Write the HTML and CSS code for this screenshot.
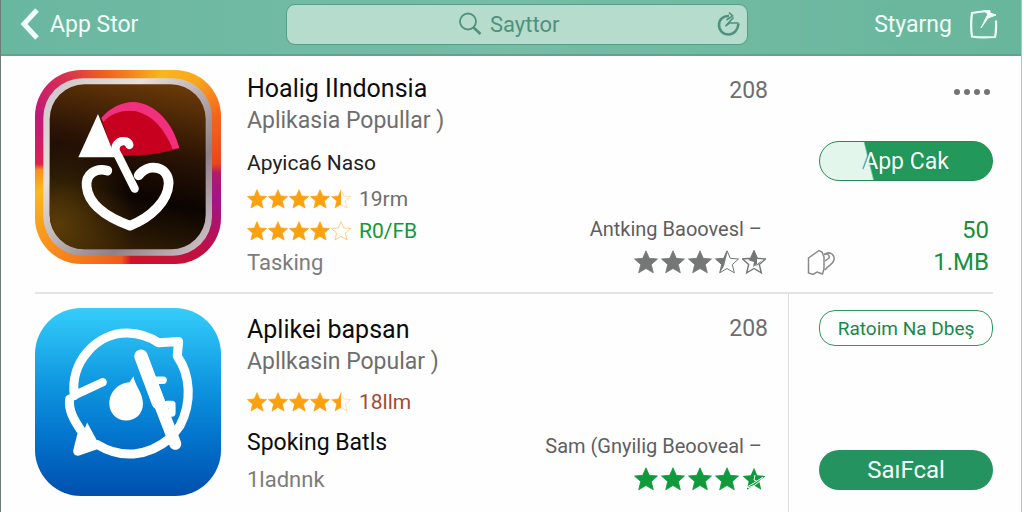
FILE: index.html
```html
<!DOCTYPE html>
<html lang="id">
<head>
    <meta charset="UTF-8">
    <meta name="viewport" content="width=device-width, initial-scale=1.0">
    <title>App Stor</title>
    <link rel="stylesheet" href="styles.css">
</head>
<body>
    <!-- Shared star shapes -->
    <svg class="defs" width="0" height="0" aria-hidden="true">
        <defs>
            <path id="star-path" d="M12 0.8 L15.3 8.3 L23.5 9 L17.3 14.500 L19.300 22.800 L12 18.500 L4.700 22.800 L6.700 14.500 L0.500 9 L8.700 8.300 Z"/>
            <clipPath id="half"><rect x="0" y="0" width="12" height="24"/></clipPath>
            <clipPath id="slant"><path d="M0 0 H13 L9 16 L4 24 H0 Z"/></clipPath>
            <symbol id="star" viewBox="0 0 24 24"><use href="#star-path" fill="currentColor" stroke="currentColor" stroke-width="0.8"/></symbol>
            <symbol id="star-half" viewBox="0 0 24 24">
                <use href="#star-path" fill="none" stroke="currentColor" stroke-width="1" stroke-opacity="0.4"/>
                <use href="#star-path" fill="currentColor" clip-path="url(#half)"/>
            </symbol>
            <symbol id="star-empty" viewBox="0 0 24 24">
                <use href="#star-path" fill="none" stroke="currentColor" stroke-width="1" stroke-opacity="0.6"/>
            </symbol>
            <symbol id="star-slant" viewBox="0 0 24 24">
                <use href="#star-path" fill="none" stroke="currentColor" stroke-width="1"/>
                <use href="#star-path" fill="currentColor" clip-path="url(#slant)"/>
            </symbol>
            <symbol id="star-broken" viewBox="0 0 24 24">
                <use href="#star-path" fill="none" stroke="currentColor" stroke-width="1.4"/>
                <path d="M12 1 L15 8 V14 L11 17 L12 12 L6 10 L9 8 Z M13 16 L20 10 L16 15 Z" fill="currentColor"/>
            </symbol>
            <symbol id="star-cut" viewBox="0 0 24 24">
                <use href="#star-path" fill="currentColor"/>
                <path d="M5 20 L12 16 L21 10 L18 14 L13 18 L7 20.5 Z M13 8 L12 13 L15 14.5" fill="none" stroke="#fff" stroke-width="1"/>
            </symbol>
        </defs>
    </svg>

    <div class="page">
        <header class="topbar">
            <a class="back" href="#">
                <svg width="20" height="34" viewBox="0 0 20 34" aria-hidden="true"><path d="M17 3 L4 17 L17 31" fill="none" stroke="currentColor" stroke-width="5"/></svg>
                App Stor
            </a>
            <label class="search">
                <svg width="24" height="24" viewBox="0 0 24 24" fill="none" stroke="currentColor" aria-hidden="true"><circle cx="10" cy="9.500" r="8" stroke-width="1.800"/><path d="M15.500 15.500 L22.500 22" stroke-width="2.600"/></svg>
                <input type="text" value="Sayttor" aria-label="Sayttor">
                <button class="reload" type="button" aria-label="Reload">
                    <svg width="24" height="26" viewBox="0 0 24 26" fill="none" stroke="currentColor" aria-hidden="true"><path d="M12 5 C6 4.500 2 9 2 14 C2 19.500 6 23.500 11.500 23.500 C17 23.500 21 19 21.500 12.500" stroke-width="2.600"/><path d="M12 1.500 L15.500 5 L9.500 9 M21.500 12 H12.500 L8.500 15 L16.500 6.500" stroke-width="1.600"/></svg>
                </button>
            </label>
            <a class="share" href="#">
                Styarng
                <svg width="30" height="32" viewBox="0 0 30 32" fill="none" stroke="currentColor" aria-hidden="true"><path d="M18 3 L4 5 C3 12 3 22 4 28.500 C11 30 20 29.500 27 29 C28.500 23 28 19 28 12.500" stroke-width="2.200"/><path d="M16 3 L22 2.500 L22 5 L28 7 L20 10 L13 20 L20 6 Z" fill="currentColor" stroke-width="1"/></svg>
            </a>
        </header>

        <main class="apps">
            <article class="app">
                <div class="tile tile-heart">
                    <svg viewBox="27 28 558 582" preserveAspectRatio="none" aria-hidden="true">
                        <defs>
                            <linearGradient id="brown" x1="0.8" y1="0" x2="0.6" y2="1">
                                <stop offset="0" stop-color="#6b3a08"/>
                                <stop offset="0.4" stop-color="#2c1405"/>
                                <stop offset="0.7" stop-color="#0b0402"/>
                                <stop offset="1" stop-color="#2e1c04"/>
                            </linearGradient>
                            <radialGradient id="glow" cx="0.05" cy="0.85" r="0.5">
                                <stop offset="0" stop-color="#5a3c08"/>
                                <stop offset="1" stop-color="#5a3c08" stop-opacity="0"/>
                            </radialGradient>
                            <linearGradient id="silver" x1="0" y1="0" x2="1" y2="1">
                                <stop offset="0" stop-color="#c9c2c8"/>
                                <stop offset="0.3" stop-color="#e8e0dc"/>
                                <stop offset="0.7" stop-color="#8d8088"/>
                                <stop offset="1" stop-color="#d8ccd0"/>
                            </linearGradient>
                        </defs>
                        <rect x="52" y="53" width="506" height="532" rx="118" fill="url(#silver)"/>
                        <rect x="71" y="71" width="468" height="495" rx="104" fill="url(#brown)"/>
                        <rect x="71" y="71" width="468" height="495" rx="104" fill="url(#glow)"/>
                        <path d="M226 172 C255 138 300 118 340 126 C400 140 442 194 460 262 C400 282 330 288 262 284 Z" fill="#c8001f"/>
                        <path d="M226 172 C255 138 300 118 340 126 C400 140 442 194 460 262 L440 266 C416 204 380 164 330 152 C290 146 255 158 232 184 Z" fill="#f0307c"/>
                        <path d="M216 160 L268 290 H157 Z" fill="#fff"/>
                        <g fill="none" stroke="#fff" stroke-linecap="round" stroke-linejoin="round">
                            <path d="M310 253 C306 238 282 238 272 252 C264 266 270 276 278 288 L326 384" stroke-width="25"/>
                            <path d="M244 330 C210 320 178 340 182 378 C188 436 250 472 312 495 C376 470 426 420 428 368 C428 316 366 306 338 344" stroke-width="29"/>
                        </g>
                    </svg>
                </div>
                <div class="info">
                    <h2 class="name">Hoalig IIndonsia</h2>
                    <p class="kind">Aplikasia Popullar )</p>
                    <p class="maker">Apyica6 Naso</p>
                    <div class="rating">
                        <span class="stars">
                            <svg><use href="#star"/></svg><svg><use href="#star"/></svg><svg><use href="#star"/></svg><svg><use href="#star"/></svg><svg><use href="#star-half"/></svg>
                        </span>
                        <span class="muted">19rm</span>
                    </div>
                    <div class="rating">
                        <span class="stars">
                            <svg><use href="#star"/></svg><svg><use href="#star"/></svg><svg><use href="#star"/></svg><svg><use href="#star"/></svg><svg><use href="#star-empty"/></svg>
                        </span>
                        <span class="green">R0/FB</span>
                    </div>
                    <p class="note">Tasking</p>
                </div>
                <div class="review">
                    <span class="count">208</span>
                    <p class="reviewer">Antking Baoovesl –</p>
                    <span class="stars stars-large grey">
                        <svg><use href="#star"/></svg><svg><use href="#star"/></svg><svg><use href="#star"/></svg><svg><use href="#star-slant"/></svg><svg><use href="#star-broken"/></svg>
                    </span>
                </div>
                <div class="side">
                    <button class="more" type="button" aria-label="More"><i></i><i></i><i></i><i></i></button>
                    <button class="pill pill-progress" type="button">App Cak</button>
                    <p class="size">50</p>
                    <p class="size size-icon">
                        <svg width="29" height="27" viewBox="0 0 29 27" fill="none" stroke="#8a8a8a" stroke-width="1.500" aria-hidden="true"><path d="M1.500 9 L12 1.500 L15 3 L17 8 V20 L15.500 25 L10 23 L6 25.500 L1.500 24 Z"/><path d="M17 6 C22 1.500 28 5 27 11 C26 16 21 16 18 21 M17 5 C20 4 23 6 22 9 L18 12"/></svg>
                        1.MB
                    </p>
                </div>
            </article>

            <article class="app app-last">
                <div class="tile tile-blue">
                    <svg viewBox="37 68 553 562" preserveAspectRatio="none" aria-hidden="true">
                        <g fill="none" stroke="#fff" stroke-linecap="round" stroke-linejoin="round">
                            <path d="M154 330 C140 230 220 142 312 143 C350 144 380 156 404 172 L464 168 L460 212 C500 270 504 350 468 420 L440 456 C370 516 290 518 222 476 L164 496 L178 440 C150 400 136 372 140 340" stroke-width="27"/>
                            <path d="M152 330 L238 290" stroke-width="25"/>
                            <path d="M354 214 L454 474" stroke-width="36"/>
                            <path d="M352 212 L404 352" stroke-width="40"/>
                            <path d="M400 284 H418 M430 356 H444 V382" stroke-width="22"/>
                        </g>
                        <path d="M330 272 C334 300 358 322 358 354 C358 384 336 404 308 404 C280 404 258 382 258 354 C258 320 284 292 318 290 Z M192 410 L232 484 L154 506 Z" fill="#fff"/>
                    </svg>
                </div>
                <div class="info">
                    <h2 class="name">Aplikei bapsan</h2>
                    <p class="kind">Apllkasin Popular )</p>
                    <div class="rating">
                        <span class="stars">
                            <svg><use href="#star"/></svg><svg><use href="#star"/></svg><svg><use href="#star"/></svg><svg><use href="#star"/></svg><svg><use href="#star-half"/></svg>
                        </span>
                        <span class="red">18llm</span>
                    </div>
                    <h3 class="subname">Spoking Batls</h3>
                    <p class="note">1ladnnk</p>
                </div>
                <div class="review">
                    <span class="count">208</span>
                    <p class="reviewer">Sam (Gnyilig Beooveal –</p>
                    <span class="stars stars-large green">
                        <svg><use href="#star"/></svg><svg><use href="#star"/></svg><svg><use href="#star"/></svg><svg><use href="#star"/></svg><svg><use href="#star-cut"/></svg>
                    </span>
                </div>
                <div class="side">
                    <button class="pill pill-outline" type="button">Ratoim Na Dbeş</button>
                    <button class="pill pill-solid" type="button">SaıFcal</button>
                </div>
            </article>
        </main>
    </div>
</body>
</html>
```

FILE: styles.css
```css
* {
    box-sizing: border-box;
}
body {
    margin: 0;
    font-family: Roboto, "Liberation Sans", sans-serif;
    font-size: 22px;
    color: #222;
    background-color: #fff;
}
h2, h3, p {
    margin: 0;
}
button, input {
    font: inherit;
    color: inherit;
    border: none;
    background: none;
    padding: 0;
}
.defs {
    position: absolute;
}
.page {
    display: flex;
    flex-direction: column;
    min-height: 100vh;
    margin-right: 2px;
    border-left: 1px solid #6d7d78;
    border-right: 1px solid #bdbfbf;
    background-color: #fefefe;
}

/* Top bar */
.topbar {
    display: grid;
    grid-template-columns: 266fr 462fr 250fr;
    align-items: center;
    height: 56px;
    padding: 0 23px 6px 19px;
    background: linear-gradient(90deg, #6ab79f, #76bca6 50%, #68b69c);
    border-bottom: 2px solid #62a38e;
}
.back, .share {
    display: flex;
    align-items: center;
    color: #f2fffa;
    font-size: 23px;
    text-decoration: none;
}
.back {
    gap: 10px;
}
.share {
    justify-content: flex-end;
    gap: 16px;
}
.search {
    position: relative;
    display: flex;
    align-items: center;
    justify-content: center;
    gap: 8px;
    height: 41px;
    padding-right: 10px;
    border: 1px solid #579c86;
    border-radius: 9px;
    background-color: #b5dccd;
    color: #4f917d;
    font-size: 22px;
}
.search input {
    width: 76px;
    outline: none;
}
.reload {
    position: absolute;
    right: 6px;
    display: flex;
}

/* App rows */
.apps {
    flex: 1;
    display: flex;
    flex-direction: column;
    padding: 0 28px 0 34px;
}
.app {
    display: flex;
    border-bottom: 2px solid #e2e3e3;
}
.app-last {
    flex: 1;
    border-bottom: none;
}
.tile {
    width: 186px;
    height: 194px;
    margin: 14px 26px 28px 0;
    border-radius: 46px;
    overflow: hidden;
}
.tile svg {
    display: block;
    width: 100%;
    height: 100%;
}
.tile-heart {
    background: conic-gradient(#f4801c, #f9b61a 20deg, #fba81c 38deg, #f4641c 60deg, #ea451c 88deg, #b01a6a 94deg, #a01688 110deg, #c0103f 140deg, #cf1428 178deg, #f05a1c 184deg, #f9901c 225deg, #fbb81c 255deg, #f79020 268deg, #e0204f 272deg, #c2187a 300deg, #d8304f 325deg, #f0601c 345deg, #f4801c);
}
.tile-blue {
    height: 188px;
    background: linear-gradient(#35cdfb, #0f97e0 40%, #0478cf 65%, #004fae);
}
.info {
    flex: 1;
    padding-top: 17px;
}
.app-last .info {
    padding-top: 20px;
}
.name {
    font-size: 25px;
    font-weight: 400;
    line-height: 32px;
    color: #0c0c0c;
}
.kind {
    font-size: 23px;
    line-height: 32px;
    color: #6e6e6e;
}
.maker {
    margin: 10px 0 4px;
    font-size: 21px;
    line-height: 32px;
}
.rating {
    display: flex;
    align-items: center;
    gap: 8px;
    height: 32px;
    font-size: 21px;
}
.app-last .rating {
    margin: 8px 0;
}
.subname {
    font-size: 23px;
    font-weight: 400;
    line-height: 34px;
    color: #0c0c0c;
}
.note {
    line-height: 32px;
    color: #7c7c7c;
}
.app-last .note {
    margin-top: 4px;
}
.stars {
    display: flex;
    gap: 1px;
    color: #fba00f;
}
.stars svg {
    width: 20px;
    height: 20px;
}
.stars-large {
    gap: 3px;
}
.stars-large svg {
    width: 24px;
    height: 24px;
}
.muted {
    color: #6e6e6e;
}
.grey {
    color: #747776;
}
.green {
    color: #0f9a3c;
}
.red {
    color: #a34a3a;
}

/* Reviews */
.review {
    display: flex;
    flex-direction: column;
    align-items: flex-end;
    padding: 19px 21px 13px 0;
}
.app-last .review {
    padding: 19px 20px 28px 0;
}
.count {
    font-size: 23px;
    line-height: 32px;
    color: #6e6e6e;
}
.reviewer {
    margin-top: auto;
    padding-right: 6px;
    font-size: 20px;
    line-height: 32px;
    color: #5e5e5e;
}
.review .stars {
    align-items: center;
    height: 34px;
    padding-right: 2px;
}

/* Right column */
.side {
    display: flex;
    flex-direction: column;
    width: 204px;
    padding: 28px 0 14px 18px;
}
.app-last .side {
    width: 205px;
    border-left: 1px solid #dcdede;
    padding: 16px 0 22px 18px;
    justify-content: space-between;
}
.more {
    display: flex;
    align-self: flex-end;
    gap: 4px;
    padding: 5px 3px;
}
.more i {
    width: 6px;
    height: 6px;
    border-radius: 50%;
    background-color: #747474;
}
.pill {
    height: 40px;
    margin-left: 12px;
    border-radius: 20px;
    font-size: 23px;
    color: #f5fffa;
}
.pill-progress {
    margin-top: 41px;
    margin-bottom: auto;
    border: 1px solid #208c54;
    background: linear-gradient(76deg, #e3f6ec 29%, #22995b 30%);
    text-shadow: -1px 0 1px #22804f;
}
.pill-outline {
    height: 36px;
    border: 1px solid #2c9a60;
    border-radius: 16px;
    font-size: 19px;
    color: #16894a;
}
.pill-solid {
    margin-bottom: 12px;
    background-color: #249360;
    font-size: 24px;
}
.size {
    padding-right: 4px;
    line-height: 32px;
    font-size: 24px;
    text-align: right;
    color: #16903f;
}
.size-icon {
    display: flex;
    align-items: center;
    justify-content: space-between;
}
```
